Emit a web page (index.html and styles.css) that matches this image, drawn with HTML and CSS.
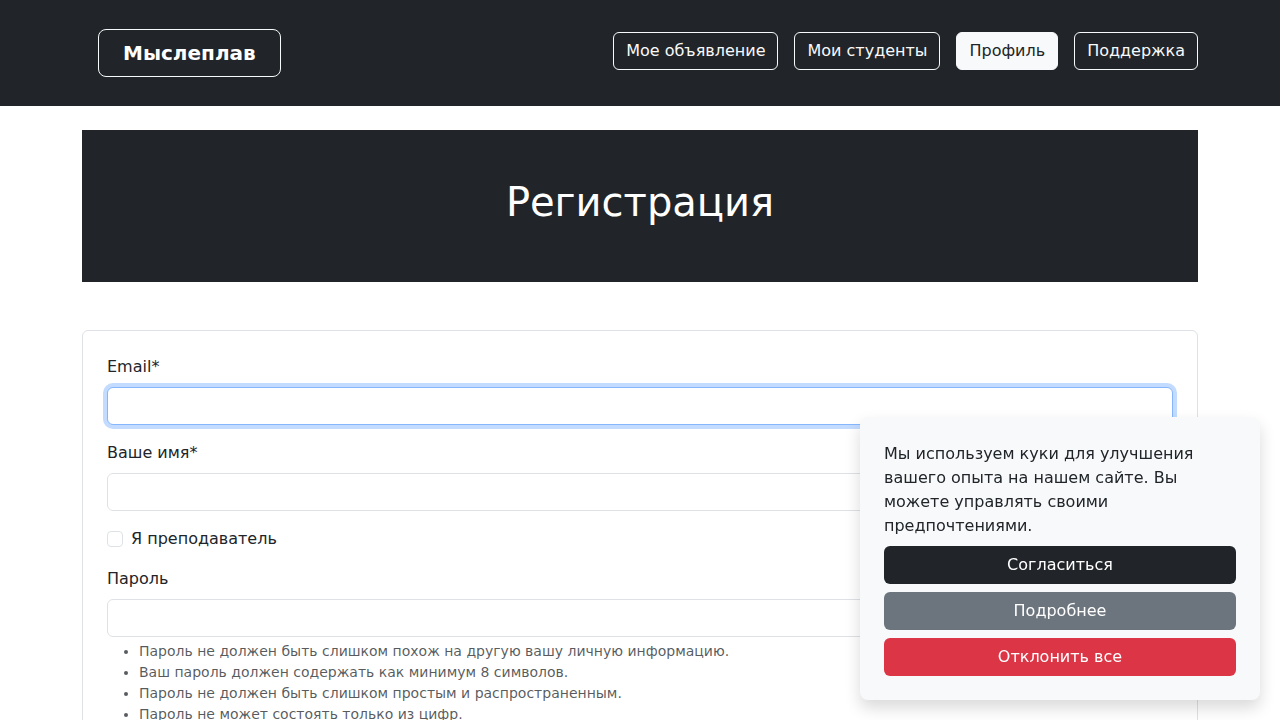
FILE: index.html
```html
<!DOCTYPE html>
<html lang="ru">
<head>
<meta charset="utf-8">
<title>Регистрация</title>
<link rel="stylesheet" href="styles.css">
</head>
<body>
<nav class="navbar">
  <div class="container nav-inner">
    <a class="brand" href="#">Мыслеплав</a>
    <ul class="nav-links">
      <li><a class="nav-btn" href="#">Мое объявление</a></li>
      <li><a class="nav-btn" href="#">Мои студенты</a></li>
      <li><a class="nav-btn active" href="#">Профиль</a></li>
      <li><a class="nav-btn" href="#">Поддержка</a></li>
    </ul>
  </div>
</nav>

<main class="container">
  <header class="hero">
    <h1>Регистрация</h1>
  </header>

  <form class="card">
    <div class="field">
      <label class="label" for="email">Email*</label>
      <input class="input focused" id="email" type="email">
    </div>
    <div class="field">
      <label class="label" for="name">Ваше имя*</label>
      <input class="input" id="name" type="text">
    </div>
    <div class="check">
      <span class="check-box"></span>
      <span class="check-label">Я преподаватель</span>
    </div>
    <div class="field">
      <label class="label" for="pwd">Пароль</label>
      <input class="input" id="pwd" type="password">
      <ul class="help">
        <li>Пароль не должен быть слишком похож на другую вашу личную информацию.</li>
        <li>Ваш пароль должен содержать как минимум 8 символов.</li>
        <li>Пароль не должен быть слишком простым и распространенным.</li>
        <li>Пароль не может состоять только из цифр.</li>
      </ul>
    </div>
  </form>
</main>

<div class="cookie">
  <p class="cookie-text">Мы используем куки для улучшения вашего опыта на нашем сайте. Вы можете управлять своими предпочтениями.</p>
  <button class="cbtn cbtn-dark" type="button">Согласиться</button>
  <button class="cbtn cbtn-gray" type="button">Подробнее</button>
  <button class="cbtn cbtn-red" type="button">Отклонить все</button>
</div>
</body>
</html>
```

FILE: styles.css
```css
* { box-sizing: border-box; }

body {
  margin: 0;
  font-family: "DejaVu Sans", sans-serif;
  font-size: 16px;
  line-height: 24px;
  color: #212529;
  background: #fff;
}

.container {
  max-width: 1140px;
  margin: 0 auto;
  padding: 0 12px;
}

.navbar {
  background: #212529;
  padding: 29px 0;
}

.nav-inner {
  display: flex;
  align-items: center;
}

.brand {
  margin-left: 16px;
  display: inline-block;
  padding: 11px 24px;
  border: 1px solid #f8f9fa;
  border-radius: 8px;
  color: #fff;
  font-weight: bold;
  font-size: 20px;
  line-height: 24px;
  text-decoration: none;
}

.nav-links {
  list-style: none;
  margin: 0 0 4px auto;
  padding: 0;
  display: flex;
  gap: 16px;
}

.nav-btn {
  display: block;
  padding: 6px 12px;
  border: 1px solid #f8f9fa;
  border-radius: 6px;
  color: #f8f9fa;
  text-decoration: none;
  line-height: 24px;
}

.nav-btn.active {
  background: #f8f9fa;
  color: #212529;
}

.hero {
  margin-top: 24px;
  background: #212529;
  height: 152px;
  display: flex;
  align-items: center;
  justify-content: center;
}

.hero h1 {
  margin: 0 0 8px;
  color: #fff;
  font-size: 40px;
  line-height: 48px;
  font-weight: 400;
}

.card {
  margin-top: 48px;
  border: 1px solid #dee2e6;
  border-radius: 6px;
  padding: 24px;
  display: flex;
  flex-direction: column;
}

.field {
  display: flex;
  flex-direction: column;
  margin-bottom: 16px;
}

.label {
  margin-bottom: 8px;
}

.input {
  height: 38px;
  border: 1px solid #dee2e6;
  border-radius: 6px;
  background: #fff;
  font: inherit;
  padding: 6px 12px;
}

.input.focused {
  border-color: #86b7fe;
  outline: none;
  box-shadow: 0 0 0 4px rgba(13, 110, 253, 0.25);
}

.check {
  display: flex;
  align-items: center;
  gap: 8px;
  margin-bottom: 16px;
}

.check-box {
  width: 16px;
  height: 16px;
  border: 1px solid #dee2e6;
  border-radius: 4px;
  background: #fff;
}

.help {
  margin: 4px 0 0;
  padding-left: 32px;
  font-size: 14px;
  line-height: 21px;
  color: rgba(33, 37, 41, 0.75);
}

.cookie {
  position: fixed;
  right: 20px;
  bottom: 20px;
  width: 400px;
  padding: 25px 24px 24px;
  background: #f8f9fa;
  border-radius: 8px;
  box-shadow: 0 8px 16px rgba(0, 0, 0, 0.15);
  display: flex;
  flex-direction: column;
  gap: 8px;
}

.cookie-text {
  margin: 0;
}

.cbtn {
  height: 38px;
  border: none;
  border-radius: 6px;
  font: inherit;
  color: #fff;
  cursor: pointer;
}

.cbtn-dark { background: #212529; }
.cbtn-gray { background: #6c757d; }
.cbtn-red { background: #dc3545; }
```
